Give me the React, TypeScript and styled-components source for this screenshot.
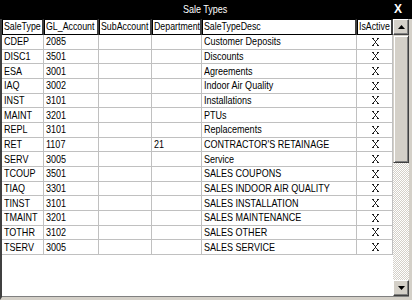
import React from "react";
import styled, { createGlobalStyle } from "styled-components";

const GlobalStyle = createGlobalStyle`
  html, body { margin: 0; padding: 0; background: #ffffff; }
  * { box-sizing: border-box; }
`;

const COLS = "42px 55px 53px 50px 155px 36px";
const FONT = `"Liberation Sans", Arial, sans-serif`;

const Window = styled.div`
  width: 412px;
  height: 300px;
  display: flex;
  flex-direction: column;
  background: #ffffff;
  font-family: ${FONT};
  font-size: 11px;
  color: #000;
  overflow: hidden;
`;

const Narrow = styled.span<{ $origin?: string; $scale?: number }>`
  display: inline-block;
  white-space: nowrap;
  transform: scaleX(${(p) => p.$scale ?? 0.82});
  transform-origin: ${(p) => p.$origin || "left"} center;
`;

const TitleBar = styled.div`
  height: 19px;
  flex: none;
  background: #000;
  color: #fff;
  display: grid;
  grid-template-columns: 1fr auto 1fr;
  align-items: center;
  padding: 0 10px 0 2px;
`;

const Title = styled.div`
  grid-column: 2;
  font-size: 11px;
  line-height: 19px;
  padding-left: 6px;
`;

const CloseX = styled.div`
  grid-column: 3;
  justify-self: end;
  font-weight: bold;
  font-size: 12px;
  line-height: 19px;
`;

const Body = styled.div`
  flex: 1;
  display: flex;
  border-left: 2px solid #404040;
  border-right: 3px solid #d4d0c8;
  border-bottom: 3px solid #d4d0c8;
  min-height: 0;
`;

const Grid = styled.div`
  flex: 1;
  display: flex;
  flex-direction: column;
  background: #fff;
  border-bottom: 1px solid #808080;
`;

const HeaderRow = styled.div`
  display: grid;
  grid-template-columns: ${COLS};
  height: 16px;
  background: #000;
`;

const HeaderCell = styled.div`
  background: #fff;
  border: 1px solid #000;
  border-right: 2px solid #404040;
  padding-left: 1px;
  line-height: 13px;
  white-space: nowrap;
  overflow: hidden;
`;

const Row = styled.div`
  display: grid;
  grid-template-columns: ${COLS};
  height: 14.667px;
`;

const Cell = styled.div<{ $center?: boolean }>`
  border-right: 1px solid #c0c0c0;
  border-bottom: 1px solid #c0c0c0;
  padding-left: 2px;
  line-height: 13px;
  white-space: nowrap;
  overflow: hidden;
  display: flex;
  align-items: center;
  justify-content: ${(p) => (p.$center ? "center" : "flex-start")};
`;

const ScrollBar = styled.div`
  width: 16px;
  flex: none;
  display: flex;
  flex-direction: column;
  border-bottom: 1px solid #808080;
`;

const ArrowButton = styled.div`
  width: 16px;
  height: 16px;
  flex: none;
  background: #d4d0c8;
  border-top: 1px solid #fff;
  border-left: 1px solid #fff;
  border-right: 1px solid #404040;
  border-bottom: 1px solid #404040;
  box-shadow: inset -1px -1px 0 #808080;
  display: flex;
  align-items: center;
  justify-content: center;
`;

const Thumb = styled.div`
  height: 128px;
  flex: none;
  background: #d4d0c8;
  border-top: 1px solid #d4d0c8;
  border-left: 1px solid #d4d0c8;
  border-right: 1px solid #404040;
  border-bottom: 1px solid #404040;
  box-shadow: inset 1px 1px 0 #fff, inset -1px -1px 0 #808080;
`;

const Track = styled.div`
  flex: 1;
  background-color: #fff;
  background-image: conic-gradient(#d4d0c8 25%, #fff 0 50%, #d4d0c8 0 75%, #fff 0);
  background-size: 2px 2px;
`;

const Arrow = ({ down }: { down?: boolean }) => (
  <svg width="7" height="4" viewBox="0 0 7 4">
    {down ? (
      <polygon points="0,0 7,0 3.5,4" fill="#000" />
    ) : (
      <polygon points="0,4 7,4 3.5,0" fill="#000" />
    )}
  </svg>
);

const CheckX = () => (
  <svg width="7" height="8" viewBox="0 0 7 8" shapeRendering="crispEdges">
    <path
      d="M0 0h2M5 0h2M1 1h1M5 1h1M2 2h1M4 2h1M3 3h1M3 4h1M2 5h1M4 5h1M1 6h1M5 6h1M0 7h2M5 7h2"
      stroke="#222"
      strokeWidth="1"
      transform="translate(0,0.5)"
    />
  </svg>
);

const headers = ["SaleType", "GL_Account", "SubAccount", "Department", "SaleTypeDesc", "IsActive"];

const rows: [string, string, string, string, string][] = [
  ["CDEP", "2085", "", "", "Customer Deposits"],
  ["DISC1", "3501", "", "", "Discounts"],
  ["ESA", "3001", "", "", "Agreements"],
  ["IAQ", "3002", "", "", "Indoor Air Quality"],
  ["INST", "3101", "", "", "Installations"],
  ["MAINT", "3201", "", "", "PTUs"],
  ["REPL", "3101", "", "", "Replacements"],
  ["RET", "1107", "", "21", "CONTRACTOR'S RETAINAGE"],
  ["SERV", "3005", "", "", "Service"],
  ["TCOUP", "3501", "", "", "SALES COUPONS"],
  ["TIAQ", "3301", "", "", "SALES INDOOR AIR QUALITY"],
  ["TINST", "3101", "", "", "SALES INSTALLATION"],
  ["TMAINT", "3201", "", "", "SALES MAINTENANCE"],
  ["TOTHR", "3102", "", "", "SALES OTHER"],
  ["TSERV", "3005", "", "", "SALES SERVICE"],
];

export default function App() {
  return (
    <>
      <GlobalStyle />
      <Window>
        <TitleBar>
          <Title>
            <Narrow $origin="center">Sale Types</Narrow>
          </Title>
          <CloseX>X</CloseX>
        </TitleBar>
        <Body>
          <Grid>
            <HeaderRow>
              {headers.map((h) => (
                <HeaderCell key={h}>
                  <Narrow $scale={0.8}>{h}</Narrow>
                </HeaderCell>
              ))}
            </HeaderRow>
            {rows.map((r) => (
              <Row key={r[0]}>
                {r.map((v, i) => (
                  <Cell key={i}>{v && <Narrow>{v}</Narrow>}</Cell>
                ))}
                <Cell $center>
                  <CheckX />
                </Cell>
              </Row>
            ))}
          </Grid>
          <ScrollBar>
            <ArrowButton>
              <Arrow />
            </ArrowButton>
            <Thumb />
            <Track />
            <ArrowButton>
              <Arrow down />
            </ArrowButton>
          </ScrollBar>
        </Body>
      </Window>
    </>
  );
}
